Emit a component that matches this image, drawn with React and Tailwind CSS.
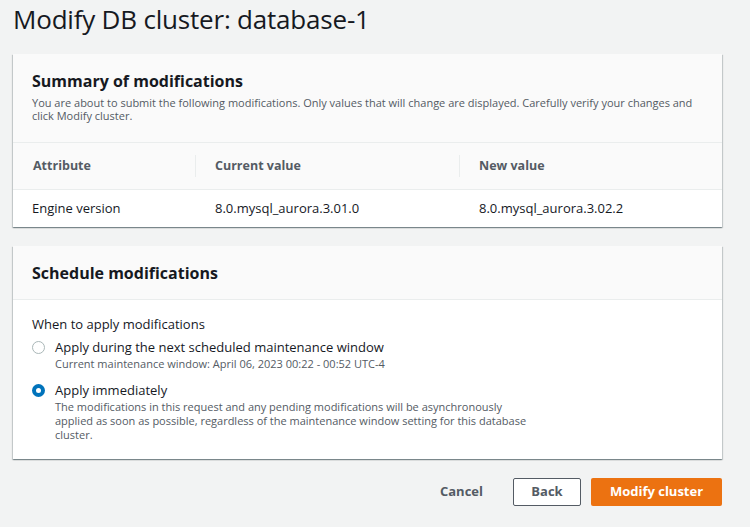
import { useState } from "react";

const font = { fontFamily: '"Open Sans", "Noto Sans", sans-serif' };

const cardShadow =
  "shadow-[0_1px_1px_0_rgba(0,28,36,0.3),1px_1px_1px_0_rgba(0,28,36,0.15),-1px_1px_1px_0_rgba(0,28,36,0.15)]";

const Radio = ({ checked }) => (
  <span
    className={`mt-[3px] w-[13px] h-[13px] rounded-full shrink-0 flex items-center justify-center ${
      checked ? "bg-[#0073bb]" : "border border-[#aab7b8] bg-white"
    }`}
  >
    {checked && <span className="w-[5px] h-[5px] rounded-full bg-white" />}
  </span>
);

const Option = ({ checked, label, children, onClick }) => (
  <div className="flex gap-[10px] cursor-pointer" onClick={onClick}>
    <Radio checked={checked} />
    <div>
      <p className="text-[13px] leading-[18px] text-[#16191f]">{label}</p>
      <p className="mt-[1px] text-[11px] leading-[14px] text-[#545b64] max-w-[472px]">{children}</p>
    </div>
  </div>
);

export default function App() {
  const [when, setWhen] = useState("now");

  return (
    <div style={font} className="w-[750px] h-[527px] bg-[#f2f3f3] overflow-hidden">
      <div className="w-[709px] ml-[13px]">
        <h1 className="text-[26px] leading-[36px] pt-[1px] text-[#16191f] tracking-[-0.2px]">
          Modify DB cluster: database-1
        </h1>

        <div className={`mt-[17px] bg-white ${cardShadow}`}>
          <div className="bg-[#fafafa] px-[19px] pt-[16px] pb-[20px] border-b border-[#eaeded]">
            <h2 className="text-[16px] leading-[22px] font-bold text-[#16191f]">Summary of modifications</h2>
            <p className="text-[11px] leading-[13px] text-[#545b64] mt-[4px]">
              You are about to submit the following modifications. Only values that will change are displayed. Carefully
              verify your changes and click Modify cluster.
            </p>
          </div>
          <div className="grid grid-cols-[182px_264px_1fr] bg-[#fafafa] h-[47px] items-center border-b border-[#eaeded] text-[12.5px] font-bold text-[#545b64]">
            <div className="px-[20px]">Attribute</div>
            <div className="px-[19px] border-l border-[#eaeded] h-[22px] flex items-center">Current value</div>
            <div className="px-[19px] border-l border-[#eaeded] h-[22px] flex items-center">New value</div>
          </div>
          <div className="grid grid-cols-[182px_264px_1fr] h-[37px] items-center text-[13px] text-[#16191f]">
            <div className="px-[19px]">Engine version</div>
            <div className="px-[20px]">8.0.mysql_aurora.3.01.0</div>
            <div className="px-[20px]">8.0.mysql_aurora.3.02.2</div>
          </div>
        </div>

        <div className={`mt-[19px] bg-white ${cardShadow}`}>
          <div className="bg-[#fafafa] px-[19px] h-[54px] flex items-center border-b border-[#eaeded]">
            <h2 className="text-[16px] font-bold text-[#16191f]">Schedule modifications</h2>
          </div>
          <div className="px-[19px] pt-[15px] pb-[17px]">
            <p className="text-[13px] leading-[18px] text-[#16191f]">When to apply modifications</p>
            <div className="mt-[5px] flex flex-col gap-[10px]">
              <Option checked={when === "next"} label="Apply during the next scheduled maintenance window" onClick={() => setWhen("next")}>
                Current maintenance window: April 06, 2023 00:22 - 00:52 UTC-4
              </Option>
              <Option checked={when === "now"} label="Apply immediately" onClick={() => setWhen("now")}>
                The modifications in this request and any pending modifications will be asynchronously applied as soon
                as possible, regardless of the maintenance window setting for this database cluster.
              </Option>
            </div>
          </div>
        </div>

        <div className="mt-[19px] flex justify-end items-center gap-[10px] text-[13px] font-bold">
          <button className="px-[20px] h-[28px] text-[#545b64]">Cancel</button>
          <button className="w-[68px] h-[28px] border border-[#545b64] bg-white text-[#545b64] rounded-[2px]">
            Back
          </button>
          <button className="w-[131px] h-[28px] bg-[#ec7211] text-white rounded-[2px]">Modify cluster</button>
        </div>
      </div>
    </div>
  );
}
